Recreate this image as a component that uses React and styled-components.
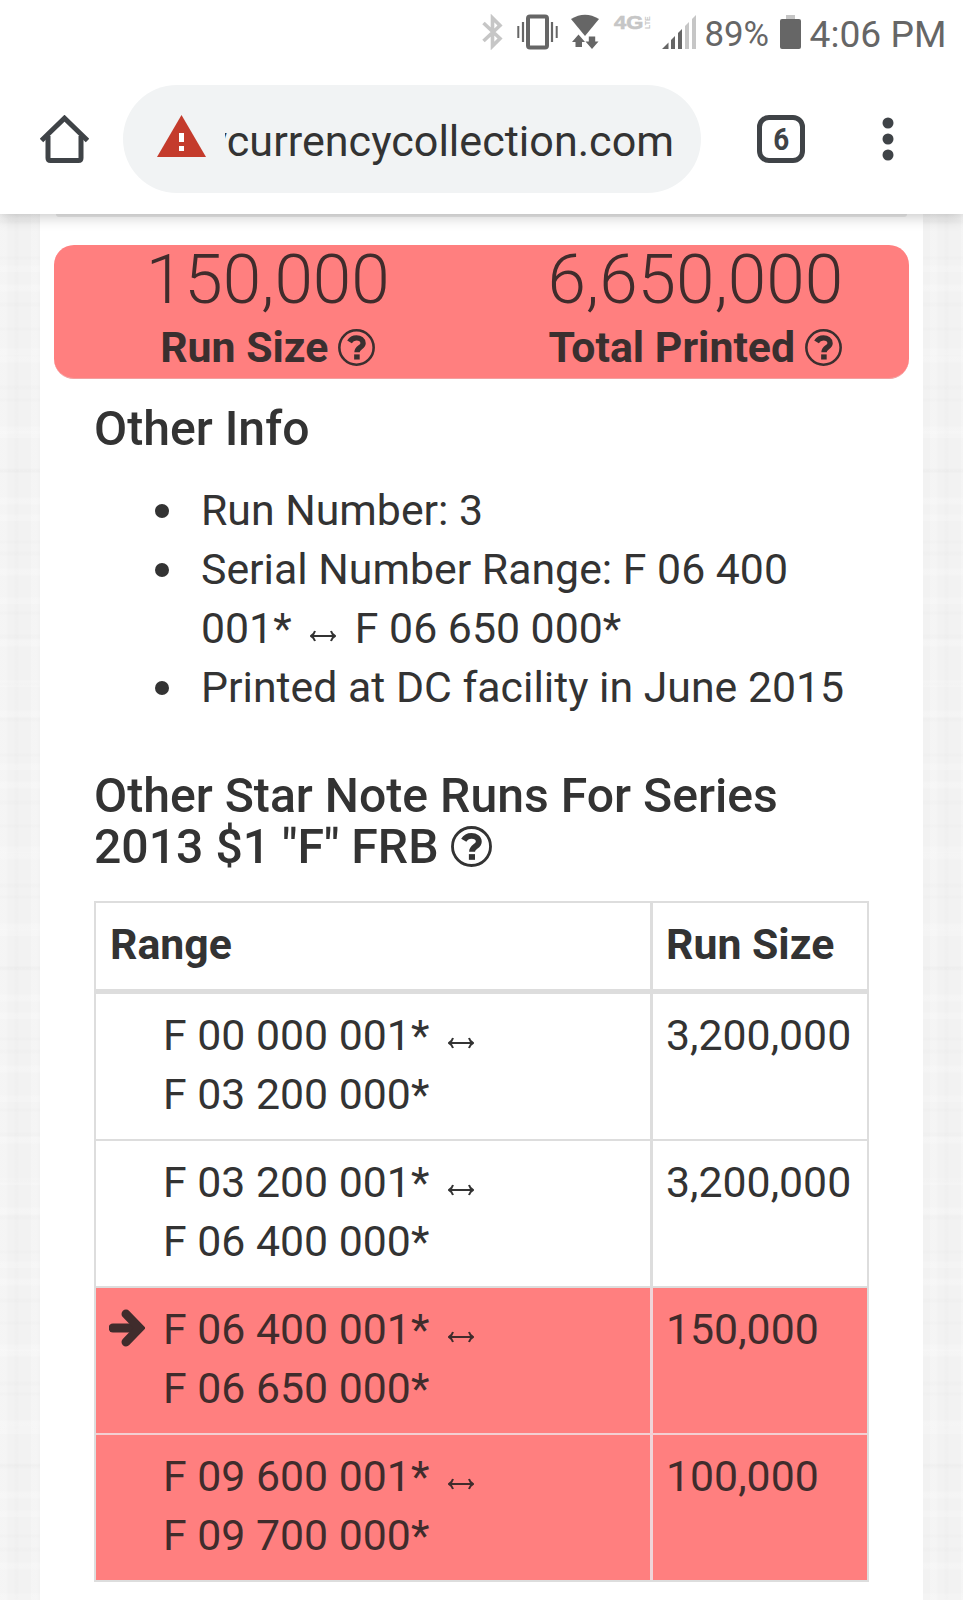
import React from 'react';
import styled, { createGlobalStyle } from 'styled-components';

const Global = createGlobalStyle`
  * { box-sizing: border-box; }
  html, body { margin: 0; padding: 0; }
  body { width: 963px; height: 1600px; overflow: hidden; background: #fff; color: #333; font-family: Roboto, sans-serif; }
`;

const Screen = styled.div`
  width: 963px; height: 1600px; overflow: hidden; display: flex; flex-direction: column;
`;
const StatusBar = styled.div`
  height: 70px; flex: none; display: flex; align-items: flex-start; color: #666; padding-left: 482px; position: relative; z-index: 2; background: #fff;
`;
const StatusIcon = styled.svg`
  flex: none; display: block; margin-top: ${p => p.$top}px; margin-right: ${p => p.$gap}px;
`;
const StatusText = styled.span`
  width: ${p => p.$width}px; flex: none; font-size: ${p => p.$size}px; line-height: 42px; margin-top: 13px; white-space: nowrap;
`;
const Network = styled.span`
  display: flex; width: 37px; margin: 15px 11px 0 0; color: #c6c6c6; height: 16px; flex: none;
`;
const NetGen = styled.span`
  font: bold 18px/16px "Liberation Sans", sans-serif; transform: scaleX(1.22); transform-origin: 0 0; width: 30px; flex: none; -webkit-text-stroke: 0.6px #c6c6c6;
`;
const NetLte = styled.span`
  font: bold 7px/7px "Liberation Sans", sans-serif; writing-mode: vertical-rl; transform: rotate(180deg); width: 7px; height: 14px; flex: none;
`;
const Toolbar = styled.div`
  height: 144px; flex: none; display: flex; align-items: flex-start; background: #fff; position: relative; z-index: 1; padding: 15px 0 0 40px;
  box-shadow: 0 2px 14px rgba(0,0,0,.24);
`;
const HomeIcon = styled.svg`display: block; flex: none; margin: 30px 34px 0 0;`;
const Omnibox = styled.div`
  width: 578px; height: 108px; border-radius: 54px; background: #f1f3f4; display: flex; flex: none; padding-left: 34px;
`;
const WarnIcon = styled.svg`display: block; flex: none; margin: 30px 19px 0 0;`;
const Url = styled.div`
  width: 449px; height: 108px; overflow: hidden; display: flex; justify-content: flex-end; font-size: 43.1px; line-height: 113px; color: #333;
`;
const Tabs = styled.div`
  width: 48px; height: 48px; border: 5px solid #3f4347; border-radius: 12px; margin: 30px 0 0 56px; flex: none; display: flex; align-items: center; justify-content: center;
  font: bold 32px/38px Roboto, sans-serif; color: #3f4347;
  span { transform: scaleX(.87); }
`;
const MenuIcon = styled.svg`display: block; margin: 32px 0 0 77px; flex: none;`;
const Page = styled.main`
  flex: 1; padding: 0 40px; background-color: #f2f2f2;
  background-image:
    repeating-linear-gradient(0deg, rgba(255,255,255,.18) 0 5px, transparent 8px 47px, rgba(0,0,0,.008) 49px 52px, transparent 54px 83px),
    repeating-linear-gradient(0deg, transparent 0 29px, rgba(255,255,255,.2) 32px 36px, transparent 39px 61px, rgba(0,0,0,.008) 63px 65px, transparent 67px 71px),
    repeating-linear-gradient(90deg, rgba(255,255,255,.2) 0 6px, transparent 9px 13px, rgba(0,0,0,.008) 15px 18px, transparent 20px 31px);
`;
const Sheet = styled.div`
  width: 883px; height: 1386px; background: #fff; padding: 0 14px; overflow: hidden;
`;
const PrevCard = styled.div`
  height: 3px; margin: 0 2px 28px; background: #ebebeb; border-radius: 0 0 16px 16px;
`;
const Summary = styled.section`
  height: 134px; background: #ff7f7f; border-radius: 20px; display: flex; border-bottom: 1px solid #f3a0a0;
`;
const Stat = styled.div`
  width: 427.5px; display: flex; flex-direction: column; align-items: center;
`;
const StatValue = styled.div`
  font-weight: 300; font-size: 69.3px; line-height: 70px; height: 73px; color: #402c2c; white-space: nowrap;
`;
const StatLabel = styled.div`
  font-weight: 700; font-size: 42.8px; line-height: 58px; color: #3a2f2f; display: flex; align-items: center; gap: 10px; white-space: nowrap;
`;
const Body = styled.div`padding: 0 41px 0 40px;`;
const Heading = styled.h3`
  font-weight: 500; font-size: 48.15px; line-height: 51px; margin: ${p => p.$top}px 0 0; white-space: nowrap;
  svg { display: inline-block; vertical-align: -4px; }
`;
const InfoList = styled.ul`
  margin: 27px 0 0; padding: 0 0 0 107px; font-size: 42.8px; line-height: 59px; white-space: nowrap; list-style: none;
`;
const InfoItem = styled.li`
  position: relative;
  &::before { content: ""; position: absolute; left: -46px; top: 23px; width: 14px; height: 14px; border-radius: 50%; background: #333; }
`;
const Table = styled.div`
  width: 775px; margin-top: 29px; border: 2px solid #ddd; font-size: 42.8px; line-height: 59px;
`;
const Row = styled.div`
  display: grid; grid-template-columns: 557px 1fr; height: ${p => p.$h}px;
  background: ${p => p.$hit ? '#ff7f7f' : '#fff'}; color: ${p => p.$hit ? '#402c2c' : '#333'};
  border-bottom: ${p => p.$line}px solid ${p => p.$hit ? '#f3cfd2' : '#ddd'};
  font-weight: ${p => p.$head ? 700 : 400};
  &:last-child { border-bottom: 0; height: 145px; }
`;
const RangeCell = styled.div`
  padding: 12px 0 0 14px; display: flex; border-right: 3px solid ${p => p.$hit ? '#f0d4d8' : '#ddd'}; white-space: nowrap;
`;
const Marker = styled.div`width: 53px; flex: none; svg { display: block; margin: 9px 0 0 -1px; }`;
const SizeCell = styled.div`padding: 12px 0 0 13px; white-space: nowrap;`;
const ArrowSlot = styled.svg`
  display: inline-block; vertical-align: ${p => p.$drop}px; margin: 0 ${p => p.$right}px 0 ${p => p.$left}px;
`;

const Help = ({ size }) => (
  <svg width={size} height={size} viewBox="0 0 36 36" fill="none" stroke="currentColor">
    <circle cx="18" cy="18" r="16.7" strokeWidth="2.5" />
    <path d="M11.200 12.600c1.500-2.600 3.800-3.900 6.800-3.900 3.600 0 6.400 2.200 6.400 5.100 0 4.100-5.900 4.200-5.900 8.700" strokeWidth="5.200" />
    <path d="M18.400 24.700v5" strokeWidth="5.400" />
  </svg>
);
const Both = ({ left, right }) => (
  <ArrowSlot $left={left} $right={right} $drop={1} width="26" height="12" viewBox="0 0 26 12" fill="none" stroke="currentColor" strokeWidth="2">
    <path d="M2 6h22" /><path d="M5 1Q4 4.500 1 6 4 7.500 5 11M21 1q1 3.500 4 5-3 1.500-4 5" strokeWidth="2" />
  </ArrowSlot>
);

const rows = [
  { from: 'F 00 000 001*', to: 'F 03 200 000*', size: '3,200,000' },
  { from: 'F 03 200 001*', to: 'F 06 400 000*', size: '3,200,000' },
  { from: 'F 06 400 001*', to: 'F 06 650 000*', size: '150,000', hit: true, current: true },
  { from: 'F 09 600 001*', to: 'F 09 700 000*', size: '100,000', hit: true },
];

export default function App() {
  return (
    <Screen>
      <Global />
      <StatusBar>
        <StatusIcon $top={14} $gap={14} width="21" height="36" viewBox="0 0 21 36" fill="none" stroke="#c6c6c6" strokeWidth="3.600">
          <path d="M1.500 9L18 24.500 10.500 32V4L18 11.500 1.500 27" />
        </StatusIcon>
        <StatusIcon $top={14} $gap={13} width="41" height="36" viewBox="0 0 41 36" fill="none" stroke="#666">
          <rect x="11" y="2.500" width="19" height="31" rx="2" strokeWidth="4" />
          <path d="M1.300 12v12M39.700 12v12" strokeWidth="2" /><path d="M6 8v20M35 8v20" strokeWidth="2.200" />
        </StatusIcon>
        <StatusIcon $top={14} $gap={15} width="28" height="36" viewBox="0 0 28 36" fill="#666">
          <path d="M0 5Q14-3.500 28 5L14 22z" />
          <path d="M7.500 20.500l6.500 7.500h-3v5H4.500v-5H1zM21 35l-6.500-7.500h3.300v-5h6.400v5h3.300z" stroke="#fff" strokeWidth=".8" paintOrder="stroke" />
        </StatusIcon>
        <Network><NetGen>4G</NetGen><NetLte>LTE</NetLte></Network>
        <StatusIcon $top={14} $gap={7.5} width="35" height="36" viewBox="0 0 35 36">
          <path fill="#666" d="M0 35l6.500-6.500V35zM9 35V26l4-4v13zM16 35V19l4-4v20z" />
          <path fill="#c6c6c6" d="M23 35V12l4-4v27zM30 35V5l4-4v34z" />
        </StatusIcon>
        <StatusText $size={34.8} $width={75}>89%</StatusText>
        <StatusIcon $top={14} $gap={9} width="21" height="36" viewBox="0 0 21 36">
          <path fill="#c6c6c6" d="M6 1h9v4H6z" /><rect y="5" width="21" height="30" rx="2" fill="#666" />
        </StatusIcon>
        <StatusText $size={37.2} $width={140}>4:06 PM</StatusText>
      </StatusBar>
      <Toolbar>
        <HomeIcon width="49" height="48" viewBox="0 0 49 48" fill="none" stroke="#3f4347" strokeWidth="5">
          <path d="M8 21v22q0 2.500 2.500 2.500h28q2.500 0 2.500-2.500V21" /><path d="M1.500 25.500L24.500 3.200l23 22.300" />
        </HomeIcon>
        <Omnibox>
          <WarnIcon width="49" height="42" viewBox="0 0 49 42">
            <path fill="#c43b2c" d="M24.500 0L49 42H0z" /><path fill="#fff" d="M22 18h5v9h-5zM22 31h5v5h-5z" />
          </WarnIcon>
          <Url><span>mycurrencycollection.com</span></Url>
        </Omnibox>
        <Tabs><span>6</span></Tabs>
        <MenuIcon width="12" height="44" viewBox="0 0 12 44" fill="#3f4347">
          <circle cx="6" cy="6" r="5.500" /><circle cx="6" cy="22" r="5.500" /><circle cx="6" cy="38" r="5.500" />
        </MenuIcon>
      </Toolbar>
      <Page>
        <Sheet>
          <PrevCard />
          <Summary>
            <Stat><StatValue>150,000</StatValue><StatLabel>Run Size <Help size={37} /></StatLabel></Stat>
            <Stat><StatValue>6,650,000</StatValue><StatLabel>Total Printed <Help size={37} /></StatLabel></Stat>
          </Summary>
          <Body>
            <Heading $top={24}>Other Info</Heading>
            <InfoList>
              <InfoItem>Run Number: 3</InfoItem>
              <InfoItem>Serial Number Range: F 06 400<br />001* <Both left={8} right={8} /> F 06 650 000*</InfoItem>
              <InfoItem>Printed at DC facility in June 2015</InfoItem>
            </InfoList>
            <Heading $top={53}>Other Star Note Runs For Series<br />2013 $1 "F" FRB <Help size={41} /></Heading>
            <Table>
              <Row $head $h={91} $line={5}><RangeCell>Range</RangeCell><SizeCell>Run Size</SizeCell></Row>
              {rows.map(r => (
                <Row key={r.from} $h={147} $line={2} $hit={r.hit}>
                  <RangeCell $hit={r.hit}>
                    <Marker>
                      {r.current && (
                        <svg width="36" height="38" viewBox="0 0 36 38" fill="none" stroke="currentColor">
                          <path d="M4 19h25" strokeWidth="9" strokeLinecap="round" /><path d="M17 5l13.500 14L17 33" strokeWidth="9" strokeLinecap="round" />
                        </svg>
                      )}
                    </Marker>
                    <div>{r.from} <Both left={8} right={0} /><br />{r.to}</div>
                  </RangeCell>
                  <SizeCell>{r.size}</SizeCell>
                </Row>
              ))}
            </Table>
          </Body>
        </Sheet>
      </Page>
    </Screen>
  );
}
